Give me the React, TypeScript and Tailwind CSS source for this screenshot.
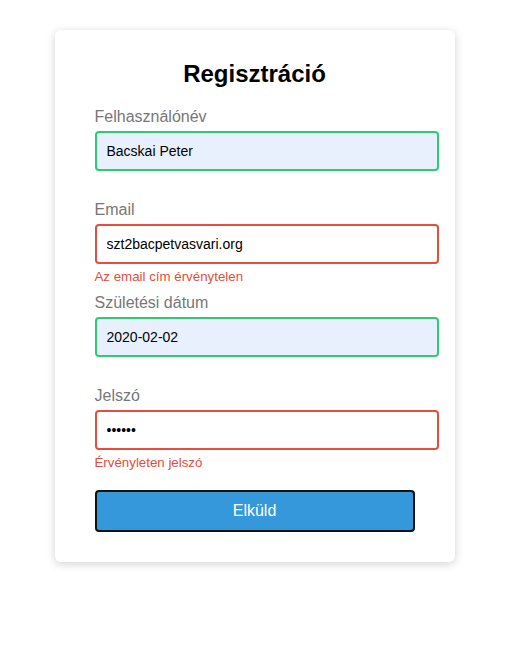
import { useState } from "react";

type Field = {
  label: string;
  value: string;
  type: string;
  ok: boolean;
  error?: string;
};

const fields: Field[] = [
  { label: "Felhasználónév", value: "Bacskai Peter", type: "text", ok: true },
  {
    label: "Email",
    value: "szt2bacpetvasvari.org",
    type: "text",
    ok: false,
    error: "Az email cím érvénytelen",
  },
  { label: "Születési dátum", value: "2020-02-02", type: "text", ok: true },
  {
    label: "Jelszó",
    value: "123456",
    type: "password",
    ok: false,
    error: "Érvényleten jelszó",
  },
];

export default function App() {
  const [values, setValues] = useState(fields.map((f) => f.value));

  return (
    <div className="min-h-screen bg-white pt-[30px] font-['Liberation_Sans',Arial,sans-serif]">
      <form
        onSubmit={(e) => e.preventDefault()}
        className="mx-auto w-[400px] rounded-[6px] bg-white px-[40px] pt-[30px] pb-[30px] shadow-[0_2px_10px_rgba(0,0,0,0.18)]"
      >
        <h2 className="mb-[20px] text-center text-[24px] font-bold leading-[28px] text-black">
          Regisztráció
        </h2>

        {fields.map((f, idx) => (
          <div key={f.label} className="mb-[10px]">
            <label className="mb-[5px] block text-[16px] leading-[18px] text-[#777777]">
              {f.label}
            </label>
            {/* content-box width: spills past the form padding like the original */}
            <input
              type={f.type}
              value={values[idx]}
              onChange={(e) =>
                setValues(values.map((v, j) => (j === idx ? e.target.value : v)))
              }
              className={`block h-[40px] w-[344px] rounded-[4px] border-2 px-[10px] text-[14px] text-black outline-none ${
                f.ok ? "border-[#2ecc71] bg-[#e8f0fe]" : "border-[#e74c3c] bg-white"
              }`}
            />
            <div className="mt-[5px] h-[15px] text-[13.3px] leading-[15px] text-[#e74c3c]">
              {f.error}
            </div>
          </div>
        ))}

        <button
          type="submit"
          className="mt-[10px] h-[42px] w-[320px] rounded-[4px] border-2 border-[#111111] bg-[#3498db] text-[16px] text-white"
        >
          Elküld
        </button>
      </form>
    </div>
  );
}
